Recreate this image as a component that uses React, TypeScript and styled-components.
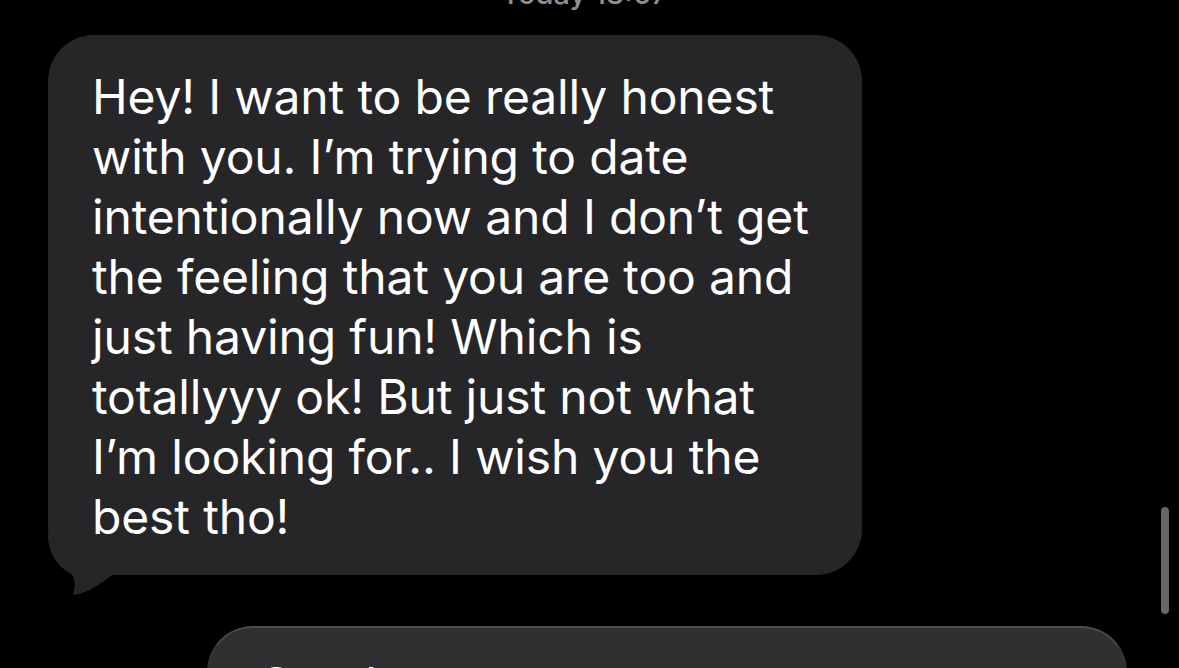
import React from 'react';
import styled, { createGlobalStyle } from 'styled-components';

const GlobalStyle = createGlobalStyle`
  html, body {
    margin: 0;
    padding: 0;
    background: #000;
    overflow: hidden;
  }
  body {
    font-family: Inter, "Noto Sans", "Liberation Sans", sans-serif;
    -webkit-font-smoothing: antialiased;
  }
`;

const Screen = styled.div`
  position: relative;
  width: 1179px;
  height: 668px;
  overflow: hidden;
  background: #000;
  display: flex;
  flex-direction: column;
  & > * {
    flex-shrink: 0;
  }
`;

const Stamp = styled.div`
  margin-top: -27px;
  height: 62px;
  margin-left: -10px;
  text-align: center;
  color: #8e8e93;
  font-size: 29px;
  font-weight: 500;
  line-height: 42px;
`;

const Row = styled.div<{ $indent: number }>`
  display: flex;
  padding-left: ${(p) => p.$indent}px;
`;

const Bubble = styled.div`
  position: relative;
  width: 814px;
  height: 540px;
  box-sizing: border-box;
  padding: 32px 20px 0 44px;
  background: #262629;
  border-radius: 46px;
  color: #fff;
  font-size: 48px;
  line-height: 60px;
  letter-spacing: -0.15px;
`;

const Line = styled.span`
  display: block;
  white-space: nowrap;
`;

const Tail = styled.svg`
  position: absolute;
  left: 0;
  bottom: -20px;
`;

const ReplyBubble = styled.div`
  margin-top: 51px;
  width: 920px;
  height: 120px;
  box-sizing: border-box;
  padding: 27px 0 0 50px;
  background: #303032;
  border-top: 2px solid #4d4d50;
  border-left: 1px solid #3c3c3e;
  border-right: 1px solid #3c3c3e;
  border-radius: 46px 46px 0 0;
  color: #fff;
  font-size: 48px;
  line-height: 60px;
`;

const Scrollbar = styled.div`
  position: absolute;
  left: 1161px;
  top: 507px;
  width: 8px;
  height: 107px;
  border-radius: 4px;
  background: #676767;
`;

const lines = [
  'Hey! I want to be really honest',
  'with you. I\u2019m trying to date',
  'intentionally now and I don\u2019t get',
  'the feeling that you are too and',
  'just having fun! Which is',
  'totallyyy ok! But just not what',
  'I\u2019m looking for.. I wish you the',
  'best tho!',
];

export default function App() {
  return (
    <>
      <GlobalStyle />
      <Screen>
        <Stamp>Today 13:07</Stamp>
        <Row $indent={48}>
          <Bubble>
            {lines.map((l) => (
              <Line key={l}>{l}</Line>
            ))}
            <Tail width="80" height="60" viewBox="0 0 80 60">
              <path
                d="M0 0 C0 18 10 32 22 38 C27 41 28 50 25 60 C40 58 54 48 64 40 L80 40 L80 0 Z"
                fill="#262629"
              />
            </Tail>
          </Bubble>
        </Row>
        <Row $indent={207}>
          <ReplyBubble>Gotcha</ReplyBubble>
        </Row>
        <Scrollbar />
      </Screen>
    </>
  );
}
